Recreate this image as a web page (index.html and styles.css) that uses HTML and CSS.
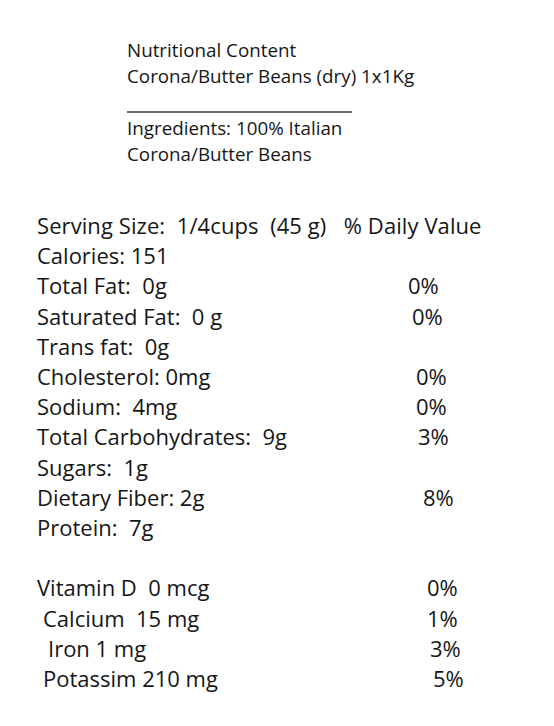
FILE: index.html
```html
<!DOCTYPE html>
<html lang="en">
<head>
  <meta charset="utf-8">
  <meta name="viewport" content="width=device-width, initial-scale=1.0">
  <title>Nutritional Content - Corona/Butter Beans</title>
  <link rel="stylesheet" href="styles.css">
</head>
<body>
  <div class="sheet">
    <!-- Product heading -->
    <div class="intro">
      <p>Nutritional Content</p>
      <p>Corona/Butter Beans (dry) 1x1Kg</p>
      <div class="rule"></div>
      <p>Ingredients: 100% Italian</p>
      <p>Corona/Butter Beans</p>
    </div>

    <!-- Nutrition facts -->
    <div class="facts">
      <p class="serving">Serving Size:  1/4cups  (45 g)   % Daily Value</p>
      <div class="row"><span>Calories: 151</span></div>
      <div class="row"><span>Total Fat:  0g</span><span class="pct">0%</span></div>
      <div class="row"><span>Saturated Fat:  0 g</span><span class="pct shift-1">0%</span></div>
      <div class="row"><span>Trans fat:  0g</span></div>
      <div class="row"><span>Cholesterol: 0mg</span><span class="pct shift-2">0%</span></div>
      <div class="row"><span>Sodium:  4mg</span><span class="pct shift-2">0%</span></div>
      <div class="row"><span>Total Carbohydrates:  9g</span><span class="pct shift-3">3%</span></div>
      <div class="row"><span>Sugars:  1g</span></div>
      <div class="row"><span>Dietary Fiber: 2g</span><span class="pct shift-4">8%</span></div>
      <div class="row"><span>Protein:  7g</span></div>

      <div class="minerals">
        <div class="row"><span>Vitamin D  0 mcg</span><span class="pct shift-5">0%</span></div>
        <div class="row indent-1"><span>Calcium  15 mg</span><span class="pct shift-5">1%</span></div>
        <div class="row indent-2"><span>Iron 1 mg</span><span class="pct shift-6">3%</span></div>
        <div class="row indent-1"><span>Potassim 210 mg</span><span class="pct shift-7">5%</span></div>
      </div>
    </div>
  </div>
</body>
</html>
```

FILE: styles.css
```css
body {
  margin: 0;
  background-color: #fff;
  color: #161616;
  font-family: "Open Sans", Lato, sans-serif;
}

p {
  margin: 0;
}

.sheet {
  padding-top: 37px;
}

.intro {
  margin-left: 127px;
  font-size: 18.8px;
  line-height: 26px;
}

.rule {
  width: 225px;
  height: 0;
  border-top: 2px solid #6a6a6a;
  margin: 22px 0 2px;
}

.facts {
  margin: 43px 0 0 37px;
  font-size: 22px;
  line-height: 30.2px;
}

.serving {
  white-space: pre;
  letter-spacing: 0.08px;
}

.row {
  display: grid;
  grid-template-columns: 371px auto;
  white-space: pre;
}

.minerals {
  margin-top: 30.2px;
}

.indent-1 {
  padding-left: 6px;
  grid-template-columns: 365px auto;
}

.indent-2 {
  padding-left: 11px;
  grid-template-columns: 360px auto;
}

.pct {
  justify-self: start;
}

.shift-1 { margin-left: 4px; }
.shift-2 { margin-left: 8px; }
.shift-3 { margin-left: 10px; }
.shift-4 { margin-left: 15px; }
.shift-5 { margin-left: 19px; }
.shift-6 { margin-left: 22px; }
.shift-7 { margin-left: 25px; }
```
